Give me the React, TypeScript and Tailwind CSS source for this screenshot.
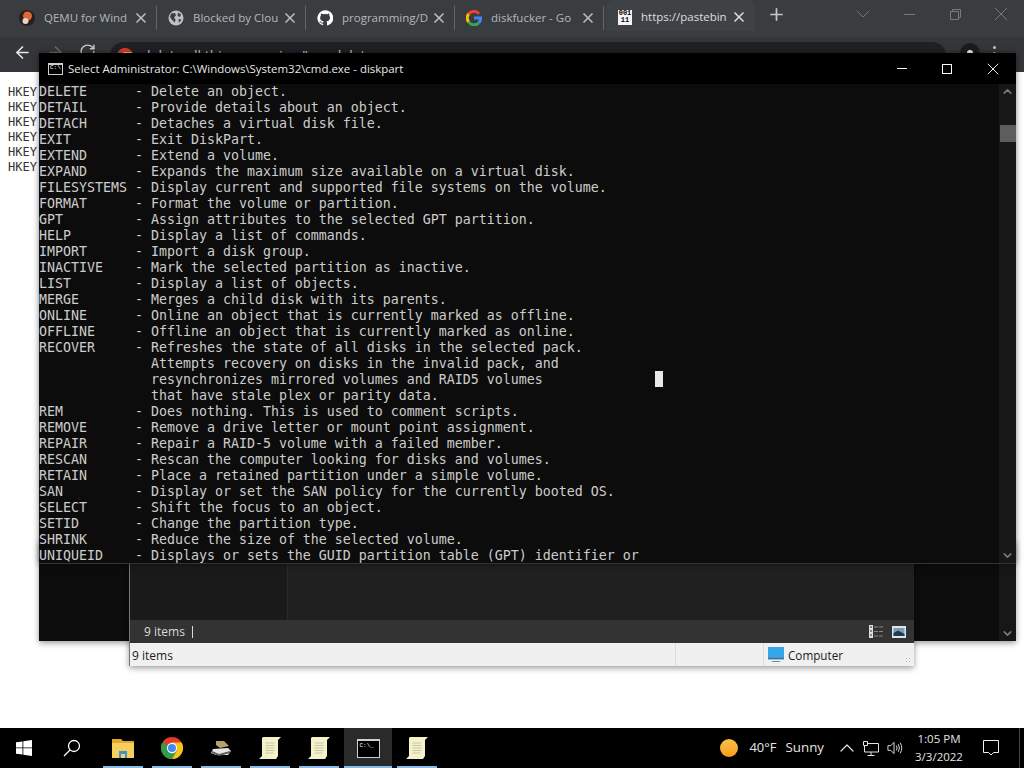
import { ArrowLeft, ArrowRight, ChevronDown, ChevronUp, Plus, RotateCw, X } from "lucide-react";

const helpLines = [
  "DELETE      - Delete an object.",
  "DETAIL      - Provide details about an object.",
  "DETACH      - Detaches a virtual disk file.",
  "EXIT        - Exit DiskPart.",
  "EXTEND      - Extend a volume.",
  "EXPAND      - Expands the maximum size available on a virtual disk.",
  "FILESYSTEMS - Display current and supported file systems on the volume.",
  "FORMAT      - Format the volume or partition.",
  "GPT         - Assign attributes to the selected GPT partition.",
  "HELP        - Display a list of commands.",
  "IMPORT      - Import a disk group.",
  "INACTIVE    - Mark the selected partition as inactive.",
  "LIST        - Display a list of objects.",
  "MERGE       - Merges a child disk with its parents.",
  "ONLINE      - Online an object that is currently marked as offline.",
  "OFFLINE     - Offline an object that is currently marked as online.",
  "RECOVER     - Refreshes the state of all disks in the selected pack.",
  "              Attempts recovery on disks in the invalid pack, and",
  "              resynchronizes mirrored volumes and RAID5 volumes",
  "              that have stale plex or parity data.",
  "REM         - Does nothing. This is used to comment scripts.",
  "REMOVE      - Remove a drive letter or mount point assignment.",
  "REPAIR      - Repair a RAID-5 volume with a failed member.",
  "RESCAN      - Rescan the computer looking for disks and volumes.",
  "RETAIN      - Place a retained partition under a simple volume.",
  "SAN         - Display or set the SAN policy for the currently booted OS.",
  "SELECT      - Shift the focus to an object.",
  "SETID       - Change the partition type.",
  "SHRINK      - Reduce the size of the selected volume.",
  "UNIQUEID    - Displays or sets the GUID partition table (GPT) identifier or",
];

const ChromeLogo = ({ size }: { size: number }) => (
  <svg width={size} height={size} viewBox="0 0 24 24">
    <circle cx="12" cy="12" r="12" fill="#e33b2e" />
    <path d="M12 12 1.600 6A12 12 0 0 0 12 24l5.200-9z" fill="#2e9e4b" />
    <path d="M12 6h10.400A12 12 0 0 1 12 24l5.200-9z" fill="#f5c518" />
    <circle cx="12" cy="12" r="5.600" fill="#fff" />
    <circle cx="12" cy="12" r="4.400" fill="#4688f1" />
  </svg>
);

const GoogleLogo = () => (
  <svg width="16" height="16" viewBox="0 0 24 24" fill="none" strokeWidth="4.500">
    <path d="M19.500 5.500A10 10 0 0 0 4 6" stroke="#ea4335" />
    <path d="M4 6a10 10 0 0 0 0 12" stroke="#fbbc05" />
    <path d="M4 18a10 10 0 0 0 15 1.500" stroke="#34a853" />
    <path d="M19 19.500A10 10 0 0 0 22 12H12" stroke="#4285f4" />
  </svg>
);

const GithubLogo = () => (
  <svg width="16" height="16" viewBox="0 0 24 24" fill="#fff">
    <path d="M12 .5a11.500 11.500 0 0 0-3.600 22.400c.6.1.8-.3.8-.6v-2c-3.200.7-3.900-1.400-3.900-1.400-.5-1.300-1.300-1.700-1.300-1.700-1-.7.1-.7.1-.7 1.200.1 1.800 1.200 1.800 1.200 1 1.800 2.700 1.300 3.400 1 .1-.8.4-1.300.7-1.600-2.600-.3-5.300-1.300-5.300-5.700 0-1.300.5-2.300 1.200-3.100-.1-.3-.5-1.500.1-3.100 0 0 1-.3 3.200 1.200a11 11 0 0 1 5.800 0c2.200-1.500 3.200-1.200 3.200-1.200.6 1.600.2 2.800.1 3.100.8.8 1.200 1.800 1.200 3.100 0 4.400-2.700 5.400-5.300 5.700.4.4.8 1.100.8 2.200v3.200c0 .3.2.7.8.6A11.500 11.500 0 0 0 12 .5z" />
  </svg>
);

const QemuLogo = () => (
  <svg width="16" height="16" viewBox="0 0 16 16">
    <circle cx="8" cy="8" r="8" fill="#2a1d1a" />
    <circle cx="8.500" cy="6" r="4.500" fill="#d9683a" />
    <circle cx="6.500" cy="11" r="3" fill="#e6d5c8" />
  </svg>
);

const GlobeLogo = () => (
  <svg width="16" height="16" viewBox="0 0 16 16">
    <circle cx="8" cy="8" r="7.500" fill="#bdc1c6" />
    <path d="M3 3.500 7 3l1 2.500-2 2 1.500 2-.5 3L4 10 2 7zM10 2.500l3 2-1 2.500-2.500-1zM10.500 9l3 .5-2.500 3.500z" fill="#3c4043" />
  </svg>
);

const PastebinLogo = () => (
  <div className="w-[14px] h-[15px] bg-[#f4f4f4] text-black text-[7px] leading-[7px] font-bold flex flex-col items-center justify-center font-['Liberation_Mono',monospace]">
    <span>001</span>
    <span>11</span>
  </div>
);

const tabs = [
  { title: "QEMU for Wind", icon: <QemuLogo /> },
  { title: "Blocked by Clou", icon: <GlobeLogo /> },
  { title: "programming/D", icon: <GithubLogo /> },
  { title: "diskfucker - Go", icon: <GoogleLogo /> },
];

const ScrollIcon = () => (
  <svg width="22" height="24" viewBox="0 0 22 24">
    <path d="M4 1h18l-3 3v16l-2 3H0l3-3V2z" fill="#f5f1c9" />
    <path d="M6.500 7h9M6.500 9.500h9M6.500 12h9M6.500 14.500h9M6.500 17h8" stroke="#c9c6a8" strokeWidth="1" />
  </svg>
);

const TaskIcon = ({ children, active }: { children: React.ReactNode; active?: boolean }) => (
  <div className={`h-full flex items-center justify-center relative ${active ? "w-[48px] bg-[#2a2a2a]" : "w-[49px]"}`}>
    {children}
    <div className={`absolute bottom-0 h-[2px] bg-[#85bde6] ${active ? "left-0 right-0" : "left-[5px] right-[4px]"}`} />
  </div>
);

const Scrollbar = ({ thumb }: { thumb?: boolean }) => (
  <div className="w-[17px] shrink-0 bg-[#171717] flex flex-col items-center justify-between py-[1px] text-[#7a7a7a]">
    <ChevronUp size={13} strokeWidth={3} />
    {thumb && <div className="absolute top-[41px] right-0 w-[16px] h-[17px] bg-[#5d5d5d]" />}
    <ChevronDown size={13} strokeWidth={3} />
  </div>
);

export default function App() {
  return (
    <div className="relative w-[1024px] h-[768px] overflow-hidden flex flex-col bg-white font-['Open_Sans',sans-serif]">
      {/* browser tab strip */}
      <div className="h-[37px] shrink-0 bg-[#3a3d40] flex items-start pl-[8px] pt-[6px]">
        {tabs.map((tab) => (
          <div key={tab.title} className="w-[149px] h-[24px] flex items-center border-r border-[#63666a] pl-[11px] pr-[7px]">
            <div className="w-[16px] flex justify-center">{tab.icon}</div>
            <span className="ml-[9px] w-[84px] whitespace-nowrap text-[11.5px] text-[#b4b7ba]">{tab.title}</span>
            <X size={16} strokeWidth={2.500} className="ml-auto text-[#b9bcbf]" />
          </div>
        ))}
        <div className="w-[149px] h-[31px] -mt-[6px] ml-[2px] pt-[3px] bg-[#3f4245] rounded-t-lg flex items-center pl-[12px] pr-[8px]">
          <PastebinLogo />
          <span className="ml-[9px] w-[84px] whitespace-nowrap text-[11.5px] text-[#dcdde0]">https://pastebin</span>
          <X size={16} strokeWidth={2.500} className="ml-auto text-[#d6d8da]" />
        </div>
        <Plus size={19} strokeWidth={2.200} className="ml-[12px] -mt-[1px] text-[#c4c6c9]" />
        <div className="ml-auto -mt-[6px] h-[28px] flex text-[#777a7d]">
          <div className="w-[46px] flex items-center justify-center">
            <ChevronDown size={24} strokeWidth={1} className="text-[#6f7276]" />
          </div>
          <div className="w-[46px] flex items-center justify-center">
            <div className="w-[11px] h-[1px] bg-[#777a7d]" />
          </div>
          <div className="w-[46px] flex items-center justify-center">
            <svg width="11" height="11" viewBox="0 0 11 11" fill="none" stroke="#777a7d">
              <path d="M.5 2.500h8v8h-8zM2.500 2.500v-2h8v8h-2" />
            </svg>
          </div>
          <div className="w-[46px] flex items-center justify-center">
            <X size={24} strokeWidth={1} />
          </div>
        </div>
      </div>

      {/* browser toolbar */}
      <div className="h-[35px] shrink-0 bg-[#35363a] flex items-start pt-[6px] pl-[13px]">
        <ArrowLeft size={19} strokeWidth={2} className="text-[#e8eaed]" />
        <ArrowRight size={19} strokeWidth={2} className="ml-[14px] text-[#6b6d70]" />
        <RotateCw size={17} strokeWidth={2} className="ml-[14px] text-[#c9cbce]" />
        <div className="ml-[14px] w-[836px] h-[27px] -mt-[1px] rounded-full bg-[#202124] flex items-center pl-[7px]">
          <ChromeLogo size={16} />
          <span className="ml-[9px] text-[14px] text-[#d5d6d8] whitespace-nowrap">delete all this regs using "reg delete</span>
        </div>
        <div className="ml-[14px] w-[20px] h-[20px] rounded-full bg-[#1b1c1e] flex items-center justify-center">
          <div className="w-[6px] h-[6px] rounded-full bg-white" />
        </div>
        <div className="ml-[13px] mt-[3px] flex flex-col gap-[3px]">
          <div className="w-[3px] h-[3px] rounded-full bg-[#c4c6c9]" />
          <div className="w-[3px] h-[3px] rounded-full bg-[#c4c6c9]" />
        </div>
      </div>

      {/* pastebin raw page */}
      <div className="flex-1 pt-[13px] pl-[8px] font-['DejaVu_Sans_Mono',monospace] text-[12px] leading-[15px] text-[#333]">
        {Array.from({ length: 6 }).map((_, i) => (
          <div key={i}>HKEY</div>
        ))}
      </div>

      {/* windows taskbar */}
      <div className="h-[40px] shrink-0 bg-black flex items-center text-white">
        <div className="w-[48px] flex justify-center">
          <svg width="16" height="16" viewBox="0 0 16 16" fill="#fff">
            <path d="M0 2.300 6.500 1.400v6.100H0zM7.300 1.300 16 0v7.500H7.300zM0 8.300h6.500v6.300L0 13.700zM7.300 8.300H16V16l-8.700-1.300z" />
          </svg>
        </div>
        <div className="w-[48px] flex justify-center">
          <svg width="18" height="18" viewBox="0 0 18 18" fill="none" stroke="#fff" strokeWidth="1.300">
            <circle cx="11" cy="7" r="5.500" />
            <path d="M7 11 1 17" />
          </svg>
        </div>
        <div className="flex h-full ml-[2px]">
          <TaskIcon>
            <svg width="22" height="20" viewBox="0 0 22 20">
              <path d="M0 1h9l2 2h11v4H0z" fill="#e2a92c" />
              <path d="M0 5h22v15H0z" fill="#f6cf5d" />
              <path d="M7 20v-7h8v7h-2v-4H9v4z" fill="#3f8fd3" />
            </svg>
          </TaskIcon>
          <TaskIcon><ChromeLogo size={22} /></TaskIcon>
          <TaskIcon>
            <svg width="22" height="18" viewBox="0 0 22 18">
              <path d="M3 10 18 9l3 3-3 4H6l-5-2z" fill="#e7e7e2" />
              <path d="M6 2h8l5 5-9 2-4-3z" fill="#b5a26a" />
              <path d="M2 12l7 3 11-3v2l-11 3-7-3z" fill="#5b5b5b" />
            </svg>
          </TaskIcon>
          <TaskIcon><ScrollIcon /></TaskIcon>
          <TaskIcon><ScrollIcon /></TaskIcon>
          <div className="ml-[1px] h-full">
            <TaskIcon active>
              <div className="w-[23px] h-[19px] bg-black border border-[#cfcfcf] border-t-[2px] text-[6px] leading-[6px] text-white pl-[2px] pt-[2px] font-['Liberation_Mono',monospace]">C:\_</div>
            </TaskIcon>
          </div>
          <TaskIcon><ScrollIcon /></TaskIcon>
        </div>
        <div className="ml-auto flex items-center h-full">
          <div className="w-[18px] h-[18px] rounded-full bg-gradient-to-b from-[#f7c04a] to-[#fb9d14]" />
          <span className="ml-[11px] text-[13px] text-[#e4e4e4]">40°F</span>
          <span className="ml-[9px] text-[13.3px] text-[#e4e4e4]">Sunny</span>
          <ChevronUp size={24} strokeWidth={1.200} className="ml-[11px] text-[#e4e4e4]" />
          <svg width="16" height="15" viewBox="0 0 16 15" fill="none" stroke="#e4e4e4" className="ml-[4px]">
            <path d="M.5.5h4v4h-4zM4.500 2.500h11v8.500H1.500V4.500M8 11v3M4.500 14.500h7" />
          </svg>
          <svg width="16" height="14" viewBox="0 0 17 14" fill="none" stroke="#e4e4e4" className="ml-[8px]">
            <path d="M1 4.500h3L7.500 1v12L4 9.500H1zM10 4.500q1.500 2.500 0 5M12 3q2.500 4 0 8M14 1.500q3.500 5.500 0 11" />
          </svg>
          <div className="ml-[5px] w-[62px] text-center text-[11.5px] leading-[18px] text-[#e4e4e4]">
            <div>1:05 PM</div>
            <div>3/3/2022</div>
          </div>
          <svg width="16" height="16" viewBox="0 0 16 16" fill="none" stroke="#f0f0f0" className="ml-[13px]">
            <path d="M.5.5h15v12h-5L8 15l-2.500-2.500h-5z" />
          </svg>
          <div className="ml-[20px] w-[1px] h-full bg-[#444]" />
          <div className="w-[4px]" />
        </div>
      </div>

      {/* cmd window left behind */}
      <div className="absolute left-[39px] top-[540px] w-[977px] h-[101px] bg-[#0c0c0c] shadow-[0_2px_6px_rgba(0,0,0,0.4)] flex justify-end">
        <div className="relative flex">
          <Scrollbar />
        </div>
      </div>

      {/* explorer window */}
      <div className="absolute left-[129px] top-[560px] w-[785px] h-[106px] flex flex-col shadow-[0_2px_6px_rgba(0,0,0,0.4)] border-l border-[#777]">
        <div className="h-[60px] bg-[#202020] flex">
          <div className="w-[158px] bg-[#1a1a1a] border-r border-[#2a2a2a]" />
        </div>
        <div className="h-[23px] bg-[#333333] flex items-center pl-[14px] pr-[8px]">
          <span className="text-[12px] text-[#dadada]">9 items</span>
          <div className="ml-[7px] w-[1px] h-[12px] bg-[#dadada]" />
          <div className="ml-auto flex items-center gap-[7px]">
            <svg width="16" height="13" viewBox="0 0 16 13">
              <path d="M0 0h4v13H0z" fill="#e0e0e0" />
              <path d="M1 2h2M1 6h2M1 10h2" stroke="#333" />
              <path d="M5 2h10M5 6.500h10M5 11h10" stroke="#888" strokeDasharray="4 1" />
            </svg>
            <svg width="14" height="12" viewBox="0 0 14 12">
              <path d="M0 0h14v12H0z" fill="#d8e6f0" />
              <path d="M1.500 2h11v8h-11z" fill="#7c9db5" />
              <path d="M1.500 7 6 4.500 12.500 8v2h-11z" fill="#25394a" />
            </svg>
          </div>
        </div>
        <div className="h-[23px] bg-[#f0f0f0] flex items-center text-[12px] text-[#1c1c1c] pl-[2px] relative">
          <span className="w-[543px] shrink-0 pt-[3px]">9 items</span>
          <div className="w-[1px] h-full bg-[#dcdcdc]" />
          <div className="ml-[87px] w-[1px] h-full bg-[#dcdcdc]" />
          <svg width="16" height="16" viewBox="0 0 16 16" className="ml-[4px]">
            <path d="M0 0h16v11H0z" fill="#35a6ea" />
            <path d="M0 11h16v1H0zM4 14.500h8" stroke="#5d8fb5" />
          </svg>
          <span className="ml-[4px] pt-[3px] text-[11.7px]">Computer</span>
          <div className="absolute right-[2px] bottom-[2px] w-[7px] h-[7px] bg-[radial-gradient(#b5b5b5_1px,transparent_1px)] bg-[length:3px_3px]" />
        </div>
      </div>

      {/* cmd window on top */}
      <div className="absolute left-[39px] top-[53px] w-[977px] h-[511px] flex flex-col bg-[#0c0c0c] border-b border-[#333] shadow-[0_0_6px_rgba(0,0,0,0.5)]">
        <div className="h-[31px] shrink-0 bg-black flex items-center pl-[9px] text-white">
          <div className="w-[15px] h-[12px] bg-black border border-[#cfcfcf] border-t-[2px] text-[6px] leading-[6px] pl-[1px] font-['Liberation_Mono',monospace]">C:\</div>
          <span className="ml-[5px] text-[11.45px] text-[#e8e8e8] whitespace-nowrap">Select Administrator: C:\Windows\System32\cmd.exe - diskpart</span>
          <div className="ml-auto w-[10px] h-[1px] bg-white mr-[35px]" />
          <div className="w-[10px] h-[10px] border border-white mr-[31px]" />
          <X size={20} strokeWidth={1.100} className="mr-[13px]" />
        </div>
        <div className="flex-1 flex relative overflow-hidden">
          <div className="flex-1 font-['DejaVu_Sans_Mono',monospace] text-[13.29px] leading-[16px] text-[#cccccc] whitespace-pre">
            {helpLines.map((line, i) => (
              <div key={i} className="h-[16px]">{line}</div>
            ))}
          </div>
          <Scrollbar thumb />
          <div className="absolute left-[616px] top-[287px] w-[8px] h-[16px] bg-[#e8e8e8]" />
        </div>
      </div>
    </div>
  );
}
